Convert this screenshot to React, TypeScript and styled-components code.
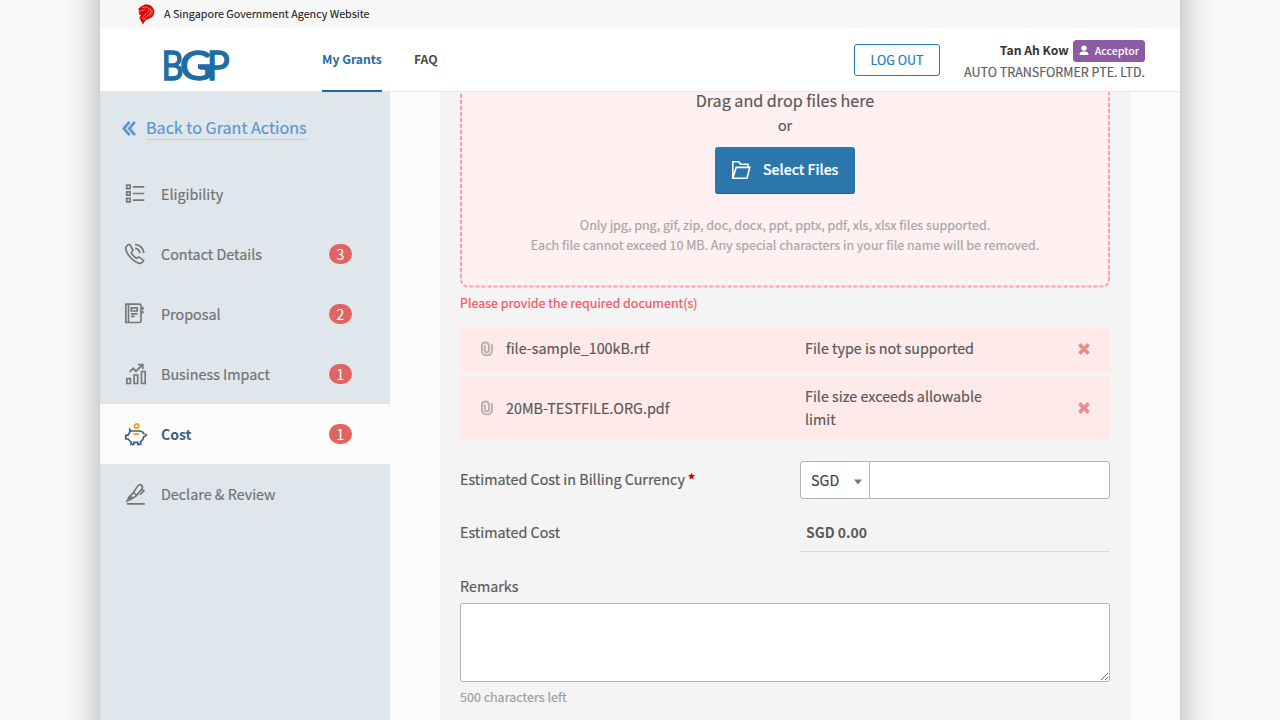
import React from "react";
import styled, { createGlobalStyle } from "styled-components";

const GlobalStyle = createGlobalStyle`
  * { box-sizing: border-box; }
  html, body { margin: 0; padding: 0; height: 720px; overflow: hidden; background: #f9f9f9; }
  body {
    font-family: "Noto Sans CJK SC", "Source Sans Pro", "Noto Sans", sans-serif;
    font-size: 14.33px;
    color: #5a5a5a;
    -webkit-text-stroke: 0.2px;
  }
  button, textarea, input { font-family: inherit; }
`;

const Page = styled.div`
  display: flex;
  justify-content: center;
  height: 720px;
  overflow: hidden;
`;

const EdgeShadow = styled.div<{ $side: "left" | "right" }>`
  width: 44px;
  background: linear-gradient(
    to ${(p) => p.$side},
    rgba(0, 0, 0, 0.16),
    rgba(0, 0, 0, 0.118) 6px,
    rgba(0, 0, 0, 0.081) 12px,
    rgba(0, 0, 0, 0.051) 18px,
    rgba(0, 0, 0, 0.029) 24px,
    rgba(0, 0, 0, 0.015) 30px,
    rgba(0, 0, 0, 0.007) 36px,
    rgba(0, 0, 0, 0)
  );
`;

const Shell = styled.div`
  width: 1080px;
  height: 720px;
  background: #fbfbfb;
  overflow: hidden;
`;

const GovBar = styled.div`
  height: 28px;
  padding-left: 38px;
  display: flex;
  align-items: center;
  gap: 9px;
  background: #f7f7f7;
  color: #222;
  font-size: 10.74px;
  line-height: 28px;
  -webkit-text-stroke: 0.1px;
`;

const Header = styled.header`
  height: 64px;
  display: flex;
  background: #fff;
  border-bottom: 1px solid #e8e8e8;
`;

const Logo = styled.div`
  width: 222px;
  padding: 21px 0 0 64px;
  -webkit-text-stroke: 0;
  svg { display: block; overflow: visible; }
`;

const Nav = styled.nav`
  display: flex;
  gap: 32px;
  flex: 1;
`;

const NavLink = styled.a<{ $active?: boolean }>`
  height: 64px;
  line-height: 62px;
  font-size: 12.2px;
  font-weight: 700;
  -webkit-text-stroke: 0;
  color: ${(p) => (p.$active ? "#1f6ca3" : "#4a4a4a")};
  border-bottom: 2px solid ${(p) => (p.$active ? "#1f6ca3" : "transparent")};
`;

const LogoutButton = styled.button`
  width: 86px;
  height: 32px;
  margin: 16px 24px 0 0;
  padding: 0;
  border: 1px solid #217ebd;
  border-radius: 3px;
  background: #fff;
  color: #217ebd;
  font-size: 12.53px;
  line-height: 30px;
`;

const Account = styled.div`
  display: flex;
  flex-direction: column;
  align-items: flex-end;
  padding: 12px 35px 0 0;
`;

const AccountName = styled.div`
  display: flex;
  gap: 4px;
  font-size: 12.17px;
  font-weight: 700;
  line-height: 21px;
  color: #333;
  -webkit-text-stroke: 0;
`;

const RoleBadge = styled.span`
  display: flex;
  align-items: center;
  gap: 6px;
  height: 21.5px;
  padding: 0 6px 0 6px;
  border-radius: 3.5px;
  background: #8e5aa1;
  color: #fff;
  font-size: 10.6px;
  font-weight: 500;
  line-height: 21px;
`;

const Company = styled.div`
  font-size: 12.53px;
  line-height: 20px;
  color: #5f5f5f;
`;

const Body = styled.div`
  display: flex;
  height: 628px;
`;

const Sidebar = styled.aside`
  width: 290px;
  background: #dfe6ec;
`;

const BackLink = styled.a`
  display: flex;
  align-items: flex-start;
  gap: 10px;
  height: 71.5px;
  padding: 24px 0 0 22px;
  color: #5b98ce;
  font-size: 16.12px;
  line-height: 22px;
  svg { margin-top: 5px; }
  span { height: 24px; border-bottom: 1px solid #c4cbd1; }
`;

const SideItem = styled.div<{ $active?: boolean }>`
  display: flex;
  align-items: center;
  height: 60px;
  padding: 0 38.5px 0 24px;
  color: ${(p) => (p.$active ? "#3d617d" : "#737373")};
  font-size: ${(p) => (p.$active ? 14 : 14.33)}px;
  font-weight: ${(p) => (p.$active ? 700 : 400)};
  -webkit-text-stroke: ${(p) => (p.$active ? 0 : 0.2)}px;
  background: ${(p) => (p.$active ? "#fbfbfb" : "transparent")};
  svg { margin-right: 13px; }
`;

const CountBadge = styled.span`
  width: 22.5px;
  height: 20px;
  margin-left: auto;
  border-radius: 10px;
  background: #e06461;
  color: #fff;
  font-size: 14.6px;
  font-weight: 400;
  line-height: 20px;
  text-align: center;
  -webkit-text-stroke: 0;
`;

const Panel = styled.main`
  width: 690px;
  margin-left: 50px;
  padding: 0 20px;
  background: #f4f4f4;
  overflow: hidden;
`;

const DropZone = styled.div`
  position: relative;
  height: 225.6px;
  margin-top: -30px;
  padding-top: 25.5px;
  display: flex;
  flex-direction: column;
  align-items: center;
  border-radius: 8px;
  background: #fff1f1;
`;

const DashedOutline = styled.svg`
  position: absolute;
  inset: 0;
  pointer-events: none;
`;

const DropTitle = styled.div`
  font-size: 16.12px;
  line-height: 24px;
`;

const DropOr = styled.div`
  margin-top: 1.5px;
  line-height: 24px;
`;

const SelectButton = styled.button`
  display: flex;
  align-items: center;
  gap: 12px;
  width: 140px;
  height: 47px;
  margin: 10px 0 21px;
  padding: 0 0 0 16px;
  border: 0;
  border-bottom: 1px solid #1d6292;
  border-radius: 3px;
  background: #2b77ac;
  color: #fff;
  font-size: 14.05px;
  font-weight: 500;
  line-height: 20px;
  span { margin-top: -2px; }
`;

const DropHint = styled.div`
  font-size: 12.53px;
  line-height: 20px;
  color: #a8a6a6;
`;

const ErrorText = styled.div`
  margin: 5.4px 0 14.9px;
  font-size: 12.53px;
  line-height: 20px;
  color: #fb5260;
`;

const FileList = styled.div`
  display: flex;
  flex-direction: column;
  gap: 5px;
`;

const FileRow = styled.div<{ $tall?: boolean }>`
  display: flex;
  align-items: center;
  height: ${(p) => (p.$tall ? 65 : 43)}px;
  padding: 0 20px;
  background: #ffeaea;
  line-height: 23px;
`;

const FileName = styled.span<{ $tall?: boolean }>`
  width: 299px;
  margin-left: 12px;
  padding-bottom: ${(p) => (p.$tall ? 1 : 3.4)}px;
`;

const FileError = styled.span<{ $tall?: boolean }>`
  width: 190px;
  margin-right: auto;
  padding-bottom: ${(p) => (p.$tall ? 2.4 : 3.4)}px;
`;

const FormRow = styled.div`
  display: flex;
  margin-top: 20.1px;
`;

const FieldLabel = styled.label`
  width: 340px;
  line-height: 36px;
  b { color: #c00; font-weight: 700; }
`;

const MoneyInput = styled.div`
  display: flex;
  width: 310px;
  height: 38px;
  border: 1px solid #b4b4b4;
  border-radius: 3px;
  background: #fff;
`;

const Currency = styled.div`
  display: flex;
  align-items: center;
  justify-content: space-between;
  width: 69px;
  padding: 0 7px 0 10px;
  border-right: 1px solid #b4b4b4;
  color: #444;
  svg { margin-top: 5px; }
`;

const CostRow = styled.div`
  display: flex;
  margin-top: 13px;
  height: 40px;
  line-height: 41px;
`;

const CostLabel = styled.span`
  width: 340px;
  line-height: 40px;
`;

const CostValue = styled.span`
  width: 310px;
  height: 40px;
  padding-left: 6px;
  border-bottom: 1px solid #dadada;
  font-size: 13.95px;
  font-weight: 700;
  -webkit-text-stroke: 0;
`;

const RemarksLabel = styled.label`
  display: block;
  margin: 22.4px 0 4.6px;
  line-height: 24px;
`;

const Remarks = styled.textarea`
  display: block;
  width: 650px;
  height: 79px;
  border: 1px solid #b4b4b4;
  border-radius: 3px;
  background: #fff;
`;

const CharsLeft = styled.div`
  margin-top: 5px;
  font-size: 12.53px;
  line-height: 20px;
  color: #a0a0a0;
`;

const Lion = () => (
  <svg width="17" height="21" viewBox="0 0 17 21">
    <path
      fill="#e10600"
      d="M.3 4.6 1.6 4 3 2.2 5.6 1.3 7.6.3 10.6.7 13.2 1.8 15.2 4.2 16.5 6.8 16 9.9 14.8 12.4 12 14.2 8.8 15.6 6.6 17.6 5 20.5 3.5 18 2.2 15.6 1.4 13.4 3 11 1 10.4 1.4 9 .4 8 1 6.8Z"
    />
    <path
      stroke="#f7f7f7"
      strokeWidth=".45"
      fill="none"
      d="M1.5 7.4 4.7 6.3 7.2 5.2M4 3.6Q7 2.2 10 3.6Q12.6 6 9.6 8.8Q5.6 10.6 4 15M12 3.7Q14.4 7.5 11.2 10.4Q7.4 12.4 5.6 16.2M14.2 5.6Q15.2 10 11 12.6"
    />
  </svg>
);

const BgpLogo = () => (
  <svg width="68" height="34" viewBox="0 0 68 34">
    <g fill="#1f6ca3" stroke="#1f6ca3" strokeWidth="1.4" fontFamily="Lato" fontSize="41.5">
      <text x="-2.4" y="31" textLength="22" lengthAdjust="spacingAndGlyphs">B</text>
      <text x="15.8" y="31" textLength="32.5" lengthAdjust="spacingAndGlyphs">G</text>
      <text x="42.8" y="31" textLength="23" lengthAdjust="spacingAndGlyphs">P</text>
    </g>
    <rect x="34" y="15.2" width="15" height="4.6" fill="#1f6ca3" />
  </svg>
);

const PersonIcon = () => (
  <svg width="10" height="11" viewBox="0 0 10 11" fill="#fff">
    <circle cx="5" cy="3.1" r="2.7" />
    <path d="M.5 10V9Q.8 6.9 3.4 6.6H6.6Q9.2 6.9 9.5 9V10Z" />
  </svg>
);

const BackIcon = () => (
  <svg width="14" height="15" viewBox="0 0 14 15" fill="none" stroke="#5b98ce" strokeWidth="2.8">
    <path d="M7.5.9 1.9 7.5 7.5 14.1M12.9.9 7.3 7.5 12.9 14.1" />
  </svg>
);

const SideSvg = ({ children, color = "#787878" }: { children: React.ReactNode; color?: string }) => (
  <svg width="24" height="24" viewBox="0 0 24 24" fill="none" stroke={color} strokeWidth="1.7">
    {children}
  </svg>
);

const ListIcon = () => (
  <SideSvg>
    <path d="M2.7 3.2h3.4v3.4H2.7ZM2.7 9.8h3.4v3.4H2.7ZM2.7 16.4h3.4v3.4H2.7ZM8.8 4.9H20.3M8.8 11.5H20.3M8.8 18.1H20.3" />
  </SideSvg>
);

const PhoneIcon = () => (
  <SideSvg>
    <path d="M4 2.7 2 5Q1 8 4.4 13Q8.8 19 14.5 21.2Q17 21.8 18.7 20L19.6 18.4 15 14.9 12.4 16.3Q9 14.3 7.3 10.6L9 8.3 6.2 3.2Q5 2 4 2.7Z" />
    <path d="M11.2 6.3Q15.3 6.9 16 11.2M11 2.4Q18.7 3.3 19.9 11" />
  </SideSvg>
);

const BookIcon = () => (
  <SideSvg>
    <path d="M1.8 2.2H15.5Q17 2.2 17 3.8V18.8Q17 20.5 15.5 20.5H1.8ZM4.5 2.2V20.5M7.3 5.8h6v3.2h-6ZM7 11.8h6.6M7 14.4h3.6M18.8 4.8v3.2M18.8 9v2.5" />
  </SideSvg>
);

const ChartIcon = () => (
  <SideSvg>
    <path d="M2.8 16.7h3.6v4.8H2.8ZM10.1 13h3.6v8.5h-3.6ZM17.5 9.5h3.7v12h-3.7ZM5.5 9.8 9.3 6.3 12 9.2 18.3 3.1M14 2.7h4.8v4.5" />
  </SideSvg>
);

const PiggyIcon = () => (
  <SideSvg color="#3d617d">
    <path d="M9.2 9H6.8L5.8 7.7V10.3L3.8 13.3H1.8V17H4.3Q5.2 19 7 19.8V22.4H9.8V20.4H13.8V22.4H16.6V19.8Q19.5 17.8 19.7 14.8Q22.3 14.2 22.3 11.8M20.3 12.5Q19 9 14.8 9H9.2" />
    <path stroke="#f7981d" d="M9.4 12.1H15.2" />
    <circle stroke="#f7981d" cx="12.6" cy="4" r="2.1" />
  </SideSvg>
);

const PenIcon = () => (
  <SideSvg>
    <path d="M2.8 21.9H20.8M3.2 19 5 14.9 8.6 11.6 13.4 4.4Q15.4 1.6 17.4 3Q19.4 4.4 17.6 7.2L12.6 13.6 7.4 16.9ZM3.2 19 8 14.4M9.4 10.6 13.4 13.4M18 7.4 19.8 8.6 16.2 12.8" />
  </SideSvg>
);

const FolderIcon = () => (
  <svg width="20" height="20" viewBox="0 0 20 20" fill="none" stroke="#fff" strokeWidth="1.6">
    <path d="M1.8 18.2V1.8H7.8L9.4 4.3H17V7.4M1.8 18.2 5.2 7.4H18.8L16 18.2Z" />
  </svg>
);

const ClipIcon = () => (
  <svg width="14" height="16" viewBox="0 0 14 16" fill="none" stroke="#b9afaf" strokeWidth="1.9">
    <path d="M4.8 4.3V9.3Q5 11.4 6.9 11.4Q8.9 11.4 8.9 9.3V4.6Q8.6 1.5 5.3 1.5Q2 1.5 1.9 4.8V10Q2.2 14.4 6.9 14.4Q11.8 14.4 11.9 9.7V3.2" />
  </svg>
);

const RemoveIcon = () => (
  <svg width="12" height="12" viewBox="0 0 12 12" stroke="#e58f93" strokeWidth="3.7">
    <path d="M1.4 1.4 10.6 10.6M10.6 1.4 1.4 10.6" />
  </svg>
);

const Caret = () => (
  <svg width="8" height="6" viewBox="0 0 8 6">
    <path d="M0 .5H8L4 5.5Z" fill="#777" />
  </svg>
);

const sections = [
  { label: "Eligibility", icon: <ListIcon /> },
  { label: "Contact Details", icon: <PhoneIcon />, count: 3 },
  { label: "Proposal", icon: <BookIcon />, count: 2 },
  { label: "Business Impact", icon: <ChartIcon />, count: 1 },
  { label: "Cost", icon: <PiggyIcon />, count: 1, active: true },
  { label: "Declare & Review", icon: <PenIcon /> },
];

const files = [
  { name: "file-sample_100kB.rtf", error: "File type is not supported" },
  { name: "20MB-TESTFILE.ORG.pdf", error: "File size exceeds allowable limit", tall: true },
];

export default function App() {
  return (
    <>
      <GlobalStyle />
      <Page>
        <EdgeShadow $side="left" />
        <Shell>
          <GovBar>
            <Lion />
            <span>A Singapore Government Agency Website</span>
          </GovBar>
          <Header>
            <Logo>
              <BgpLogo />
            </Logo>
            <Nav>
              <NavLink $active>My Grants</NavLink>
              <NavLink>FAQ</NavLink>
            </Nav>
            <LogoutButton>LOG OUT</LogoutButton>
            <Account>
              <AccountName>
                Tan Ah Kow
                <RoleBadge>
                  <PersonIcon />
                  Acceptor
                </RoleBadge>
              </AccountName>
              <Company>AUTO TRANSFORMER PTE. LTD.</Company>
            </Account>
          </Header>
          <Body>
            <Sidebar>
              <BackLink>
                <BackIcon />
                <span>Back to Grant Actions</span>
              </BackLink>
              {sections.map((s) => (
                <SideItem key={s.label} $active={s.active}>
                  {s.icon}
                  {s.label}
                  {s.count && <CountBadge>{s.count}</CountBadge>}
                </SideItem>
              ))}
            </Sidebar>
            <Panel>
              <DropZone>
                <DashedOutline width="650" height="225.6">
                  <rect
                    x="1"
                    y="1"
                    width="648"
                    height="223.6"
                    rx="7"
                    fill="none"
                    stroke="#ff9fa7"
                    strokeWidth="2"
                    strokeDasharray="4.2 1.8"
                  />
                </DashedOutline>
                <DropTitle>Drag and drop files here</DropTitle>
                <DropOr>or</DropOr>
                <SelectButton>
                  <FolderIcon />
                  <span>Select Files</span>
                </SelectButton>
                <DropHint>Only jpg, png, gif, zip, doc, docx, ppt, pptx, pdf, xls, xlsx files supported.</DropHint>
                <DropHint>Each file cannot exceed 10 MB. Any special characters in your file name will be removed.</DropHint>
              </DropZone>
              <ErrorText>Please provide the required document(s)</ErrorText>
              <FileList>
                {files.map((f) => (
                  <FileRow key={f.name} $tall={f.tall}>
                    <ClipIcon />
                    <FileName $tall={f.tall}>{f.name}</FileName>
                    <FileError $tall={f.tall}>{f.error}</FileError>
                    <RemoveIcon />
                  </FileRow>
                ))}
              </FileList>
              <FormRow>
                <FieldLabel>
                  Estimated Cost in Billing Currency <b>*</b>
                </FieldLabel>
                <MoneyInput>
                  <Currency>
                    SGD
                    <Caret />
                  </Currency>
                </MoneyInput>
              </FormRow>
              <CostRow>
                <CostLabel>Estimated Cost</CostLabel>
                <CostValue>SGD 0.00</CostValue>
              </CostRow>
              <RemarksLabel>Remarks</RemarksLabel>
              <Remarks />
              <CharsLeft>500 characters left</CharsLeft>
            </Panel>
          </Body>
        </Shell>
        <EdgeShadow $side="right" />
      </Page>
    </>
  );
}
